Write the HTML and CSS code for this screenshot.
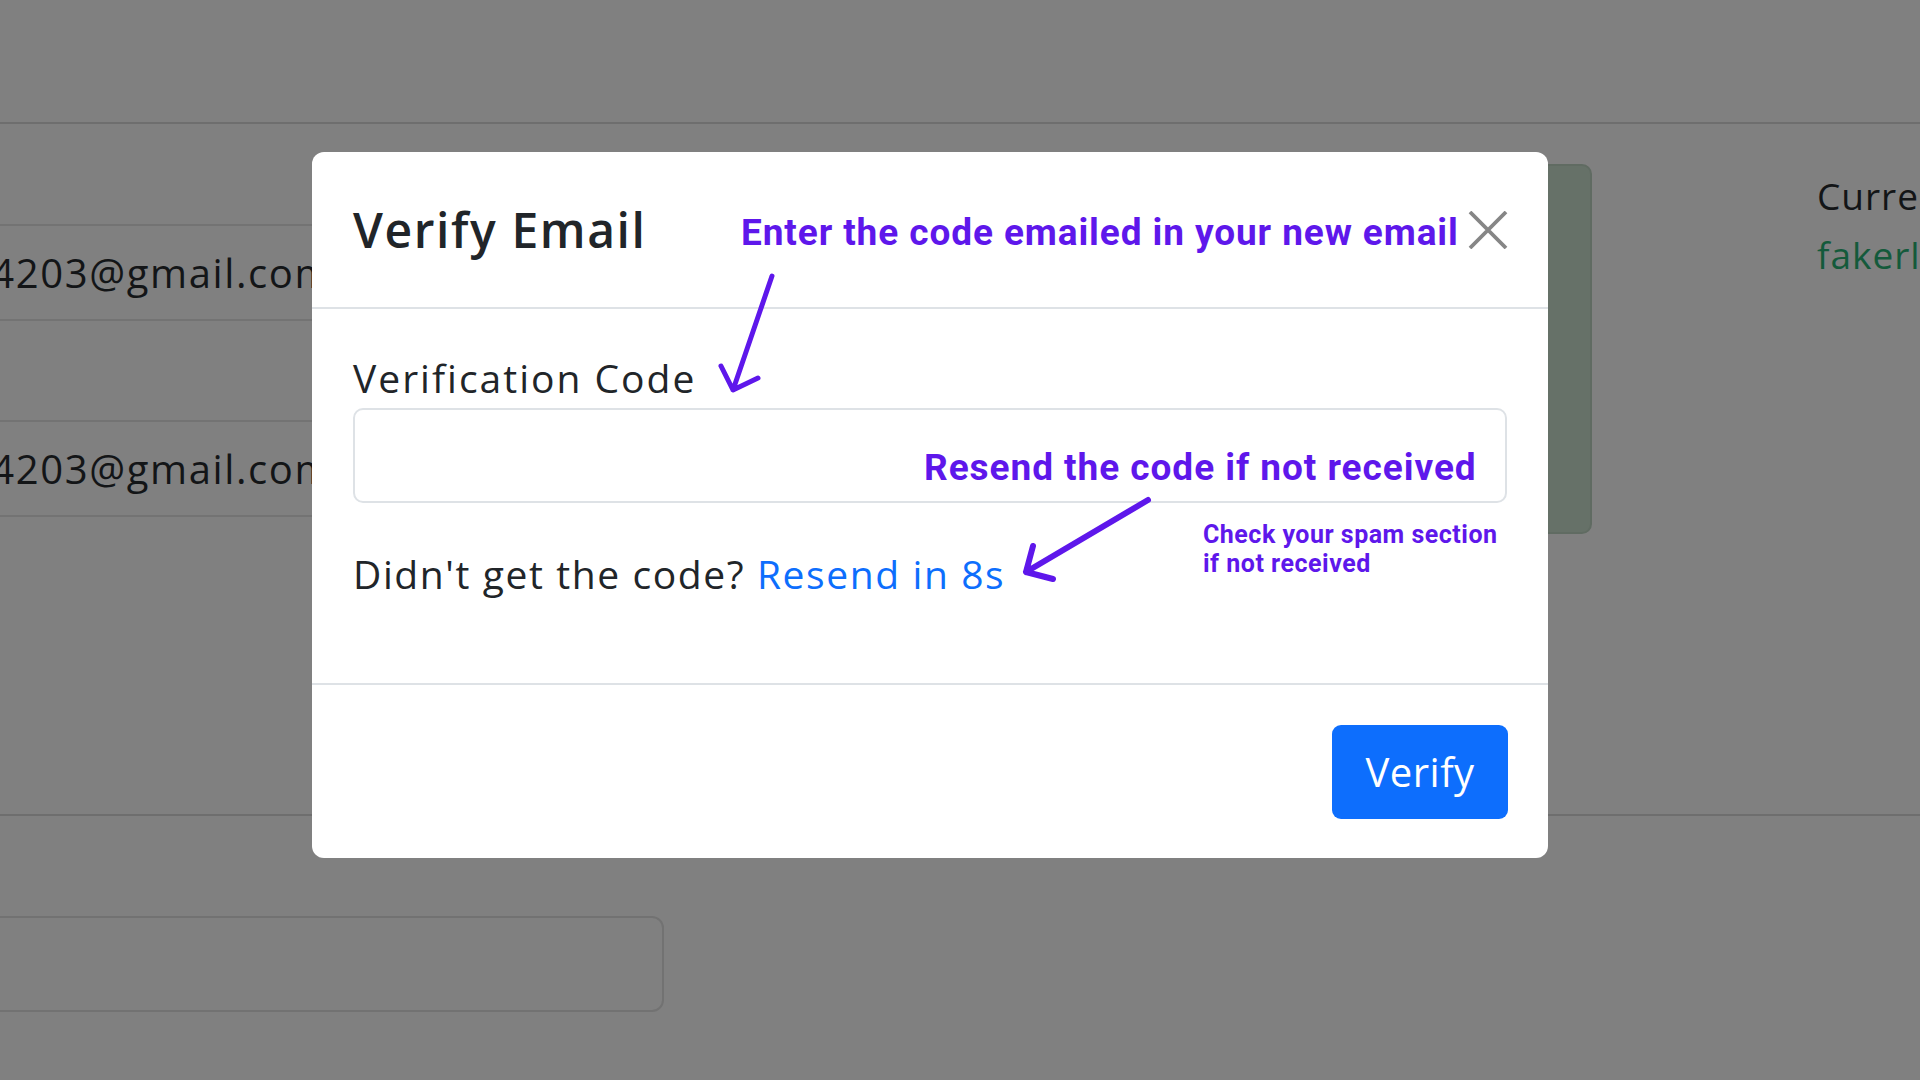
FILE: index.html
```html
<!DOCTYPE html>
<html lang="en">
<head>
<meta charset="utf-8">
<title>Verify Email</title>
<link rel="stylesheet" href="styles.css">
</head>
<body>
<div class="page">
  <div class="nav"></div>
  <div class="content">
    <div class="left-col">
      <div class="field-row">fakeuser4203@gmail.com</div>
      <div class="field-row second">fakeuser4203@gmail.com</div>
    </div>
    <div class="green-card"></div>
    <div class="right-col">
      <div class="cur-label">Current Email</div>
      <div class="cur-value">fakerlastname@gmail.com</div>
    </div>
  </div>
  <div class="divider"></div>
  <div class="bottom-box"></div>
</div>

<div class="overlay">
  <div class="modal">
    <div class="modal-header">
      <h5 class="modal-title">Verify Email</h5>
      <button class="btn-close" aria-label="Close">
        <svg viewBox="0 0 40 38" width="40" height="38"><path d="M2 1 L38 37 M38 1 L2 37" stroke="#868686" stroke-width="3.8" fill="none"/></svg>
      </button>
    </div>
    <div class="modal-body">
      <label class="form-label">Verification Code</label>
      <input class="form-control" type="text">
      <p class="resend-line">Didn't get the code? <span class="resend-link">Resend in 8s</span></p>
    </div>
    <div class="modal-footer">
      <button class="btn-verify">Verify</button>
    </div>

    <div class="note note-top">Enter the code emailed in your new email</div>
    <div class="note note-resend">Resend the code if not received</div>
    <div class="note note-spam">Check your spam section<br>if not received</div>
    <svg class="arrows" width="1236" height="706" viewBox="0 0 1236 706">
      <path d="M460 124 L421 238 M409 214 L421 238 L446 226" stroke="#5e17eb" stroke-width="5" fill="none" stroke-linecap="round" stroke-linejoin="round"/>
      <path d="M836 348 L714 420 M721 394 L714 420 L741 427" stroke="#5e17eb" stroke-width="6" fill="none" stroke-linecap="round" stroke-linejoin="round"/>
    </svg>
  </div>
</div>
</body>
</html>
```
FILE: styles.css
```css
* { box-sizing: border-box; }
html, body { margin: 0; padding: 0; }
body {
  width: 1920px;
  height: 1080px;
  overflow: hidden;
  background: #808080;
  font-family: "Open Sans", "Noto Sans", sans-serif;
  color: #131517;
  position: relative;
}
.page { width: 1920px; height: 1080px; overflow: hidden; }
.nav { height: 124px; border-bottom: 2px solid #6e6e6e; }
.content { display: flex; height: 690px; position: relative; }
.left-col { width: 720px; margin-left: -185px; padding-top: 100px; flex: none; }
.field-row {
  height: 97px;
  border-top: 2px solid #737373;
  border-bottom: 2px solid #737373;
  font-size: 40px;
  line-height: 93px;
  letter-spacing: 1.6px;
  padding-left: 2px;
  white-space: nowrap;
}
.field-row.second { margin-top: 99px; }
.green-card {
  width: 300px;
  height: 370px;
  margin-top: 40px;
  margin-left: 757px;
  background: #667168;
  border: 2px solid #606b62;
  border-radius: 10px;
  flex: none;
}
.right-col { margin-left: 225px; padding-top: 42px; white-space: nowrap; font-size: 37px; line-height: 59px; letter-spacing: 1px; }
.cur-value { color: #145a3b; }
.divider { height: 2px; background: #6e6e6e; }
.bottom-box {
  width: 760px;
  height: 96px;
  margin-top: 100px;
  margin-left: -96px;
  border: 2px solid #727272;
  border-radius: 12px;
}

.overlay {
  position: absolute;
  inset: 0;
  padding: 152px 0 0 312px;
}
.modal {
  position: relative;
  width: 1236px;
  height: 706px;
  background: #fff;
  border-radius: 12px;
  display: flex;
  flex-direction: column;
  color: #212529;
}
.modal-header {
  height: 157px;
  padding: 0 40px 0 41px;
  border-bottom: 2px solid #dee2e6;
  display: flex;
  align-items: center;
  justify-content: space-between;
}
.modal-title {
  margin: 0;
  font-size: 48px;
  font-weight: 600;
  letter-spacing: 1.6px;
  line-height: 1.2;
}
.btn-close {
  width: 40px;
  height: 38px;
  padding: 0;
  border: 0;
  background: none;
  display: block;
}
.btn-close svg { display: block; }
.modal-body {
  height: 376px;
  padding: 40px 41px 0 41px;
  border-bottom: 2px solid #dee2e6;
}
.form-label {
  display: block;
  font-size: 39px;
  line-height: 57px;
  letter-spacing: 2px;
}
.form-control {
  display: block;
  width: 100%;
  height: 95px;
  margin-top: 2px;
  border: 2px solid #dee2e6;
  border-radius: 10px;
  background: #fff;
  outline: none;
}
.resend-line {
  margin: 42px 0 0 0;
  font-size: 39px;
  line-height: 57px;
  letter-spacing: 1.6px;
}
.resend-link { color: #0d6efd; }
.modal-footer {
  flex: 1;
  padding: 0 40px;
  display: flex;
  align-items: center;
  justify-content: flex-end;
}
.btn-verify {
  width: 176px;
  height: 94px;
  border: 0;
  border-radius: 9px;
  background: #0d6efd;
  color: #fff;
  font-family: "Open Sans", "Noto Sans", sans-serif;
  font-size: 40px;
  letter-spacing: 0.5px;
  padding: 0;
}

.note {
  position: absolute;
  color: #5e17eb;
  font-family: Roboto, "Liberation Sans", sans-serif;
  font-weight: 700;
  white-space: nowrap;
}
.note-top { left: 429px; top: 62px; font-size: 37px; line-height: 1; letter-spacing: 0.9px; }
.note-resend { left: 612px; top: 297px; font-size: 37px; line-height: 1; letter-spacing: 0.95px; }
.note-spam { left: 891px; top: 368px; font-size: 25px; line-height: 29px; letter-spacing: 0.5px; }
.arrows { position: absolute; left: 0; top: 0; pointer-events: none; }
```
